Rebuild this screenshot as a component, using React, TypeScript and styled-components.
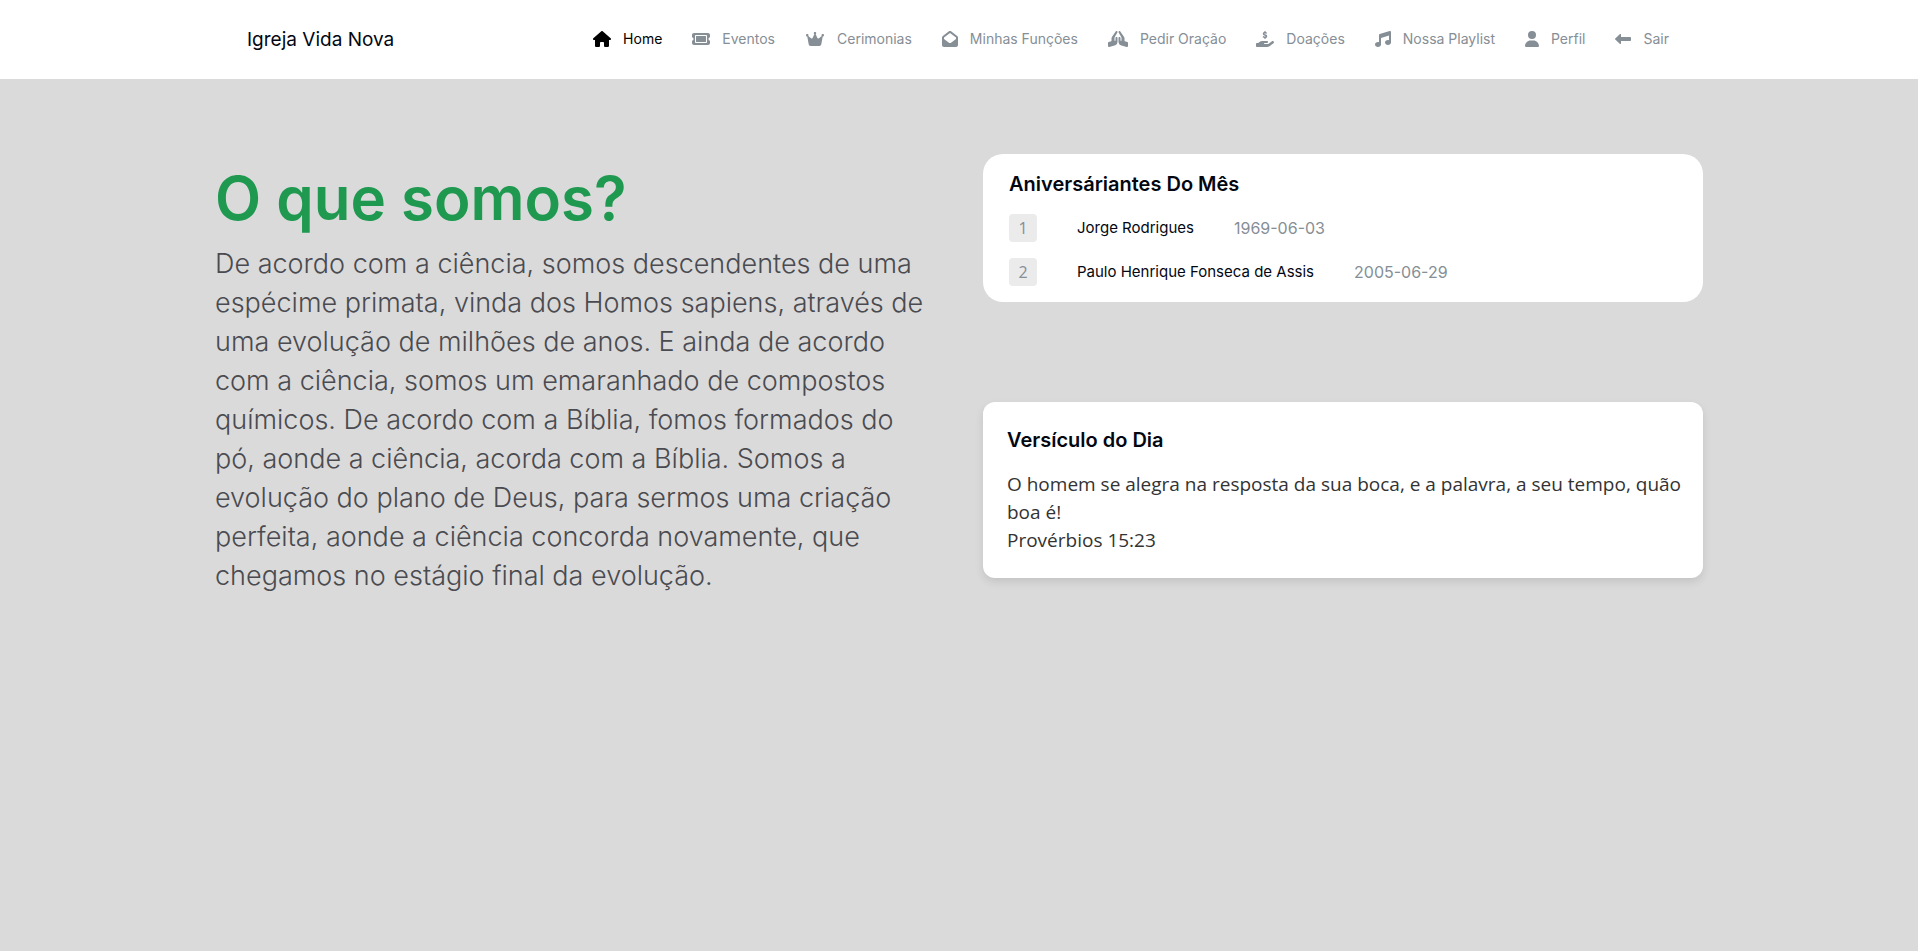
import React from "react";
import styled, { createGlobalStyle } from "styled-components";
import {
  FaHouse,
  FaTicket,
  FaCrown,
  FaEnvelopeOpen,
  FaHandsPraying,
  FaHandHoldingDollar,
  FaMusic,
  FaUser,
  FaLeftLong,
} from "react-icons/fa6";
import type { IconType } from "react-icons";

const GlobalStyle = createGlobalStyle`
  *, *::before, *::after { box-sizing: border-box; }
  body {
    margin: 0;
    background: #dadada;
    color: #030712;
    font-family: Inter, "Liberation Sans", sans-serif;
  }
  h1, h2, p, ul, ol { margin: 0; padding: 0; }
  ul, ol { list-style: none; }
`;

const Header = styled.header`
  background: #ffffff;
`;

const HeaderInner = styled.div`
  display: flex;
  align-items: center;
  justify-content: space-between;
  max-width: 1488px;
  min-height: 79px;
  margin: 0 auto;
  padding: 0 34px 0 32px;
`;

const Brand = styled.a`
  color: #030712;
  font-size: 19px;
  line-height: 28px;
  text-decoration: none;
  white-space: nowrap;
`;

const NavList = styled.ul`
  display: flex;
  gap: 30px;
  padding-bottom: 2px;
`;

const NavLink = styled.a<{ $active?: boolean; $iconWidth: number }>`
  display: flex;
  align-items: center;
  gap: 12px;
  color: ${({ $active }) => ($active ? "#000000" : "#868e96")};
  font-size: 14px;
  line-height: 20px;
  text-decoration: none;
  white-space: nowrap;

  svg {
    flex: none;
    height: 16px;
    width: ${({ $iconWidth }) => $iconWidth}px;
  }
`;

const Main = styled.main`
  display: grid;
  grid-template-columns: repeat(2, minmax(0, 1fr));
  align-items: start;
  gap: 48px;
  max-width: 1488px;
  margin: 0 auto;
  padding: 75px 0 48px;
`;

const About = styled.section`
  display: flex;
  flex-direction: column;
  gap: 14px;
  padding-top: 12px;
`;

const AboutTitle = styled.h1`
  color: #1f9950;
  font-size: 60px;
  font-weight: 600;
  line-height: 64px;
`;

const AboutText = styled.p`
  color: #4a4b50;
  font-size: 27px;
  font-weight: 300;
  line-height: 39px;
  white-space: pre-line;
`;

const Side = styled.div`
  display: flex;
  flex-direction: column;
  gap: 100px;
`;

const Card = styled.section`
  display: flex;
  flex-direction: column;
  gap: 16px;
  background: #ffffff;
`;

const BirthdayCard = styled(Card)`
  padding: 16px 26px;
  border-radius: 20px;
`;

const VerseCard = styled(Card)`
  padding: 24px 16px 24px 24px;
  border-radius: 12px;
  box-shadow: 0 4px 8px rgba(0, 0, 0, 0.1);
`;

const CardTitle = styled.h2`
  font-size: 20px;
  font-weight: 600;
  line-height: 28px;
`;

const BirthdayList = styled.ol`
  display: flex;
  flex-direction: column;
  gap: 16px;
`;

const BirthdayItem = styled.li`
  display: flex;
  align-items: center;
  gap: 40px;
  font-size: 15px;
  line-height: 28px;
`;

const Rank = styled.span`
  width: 28px;
  height: 28px;
  border-radius: 4px;
  background: #ebebeb;
  color: #868e96;
  font-family: "Open Sans", sans-serif;
  font-size: 16px;
  text-align: center;
`;

const BirthDate = styled.time`
  color: #868e96;
  font-size: 16px;
`;

const Verse = styled.p`
  color: #333333;
  font-family: "Open Sans", sans-serif;
  font-size: 19px;
  line-height: 28px;
`;

const navItems: { label: string; icon: IconType; iconWidth: number }[] = [
  { label: "Home", icon: FaHouse, iconWidth: 18 },
  { label: "Eventos", icon: FaTicket, iconWidth: 18 },
  { label: "Cerimonias", icon: FaCrown, iconWidth: 20 },
  { label: "Minhas Funções", icon: FaEnvelopeOpen, iconWidth: 16 },
  { label: "Pedir Oração", icon: FaHandsPraying, iconWidth: 20 },
  { label: "Doações", icon: FaHandHoldingDollar, iconWidth: 18 },
  { label: "Nossa Playlist", icon: FaMusic, iconWidth: 16 },
  { label: "Perfil", icon: FaUser, iconWidth: 14 },
  { label: "Sair", icon: FaLeftLong, iconWidth: 16 },
];

const birthdays = [
  { name: "Jorge Rodrigues", date: "1969-06-03" },
  { name: "Paulo Henrique Fonseca de Assis", date: "2005-06-29" },
];

const aboutText = `De acordo com a ciência, somos descendentes de uma
espécime primata, vinda dos Homos sapiens, através de
uma evolução de milhões de anos. E ainda de acordo
com a ciência, somos um emaranhado de compostos
químicos. De acordo com a Bíblia, fomos formados do
pó, aonde a ciência, acorda com a Bíblia. Somos a
evolução do plano de Deus, para sermos uma criação
perfeita, aonde a ciência concorda novamente, que
chegamos no estágio final da evolução.`;

export default function App() {
  return (
    <>
      <GlobalStyle />
      <Header>
        <HeaderInner>
          <Brand href="#">Igreja Vida Nova</Brand>
          <nav>
            <NavList>
              {navItems.map(({ label, icon: Icon, iconWidth }, index) => (
                <li key={label}>
                  <NavLink href="#" $active={index === 0} $iconWidth={iconWidth}>
                    <Icon aria-hidden="true" />
                    {label}
                  </NavLink>
                </li>
              ))}
            </NavList>
          </nav>
        </HeaderInner>
      </Header>
      <Main>
        <About>
          <AboutTitle>O que somos?</AboutTitle>
          <AboutText>{aboutText}</AboutText>
        </About>
        <Side>
          <BirthdayCard>
            <CardTitle>Aniversáriantes Do Mês</CardTitle>
            <BirthdayList>
              {birthdays.map(({ name, date }, index) => (
                <BirthdayItem key={name}>
                  <Rank>{index + 1}</Rank>
                  <span>{name}</span>
                  <BirthDate dateTime={date}>{date}</BirthDate>
                </BirthdayItem>
              ))}
            </BirthdayList>
          </BirthdayCard>
          <VerseCard>
            <CardTitle>Versículo do Dia</CardTitle>
            <Verse>
              O homem se alegra na resposta da sua boca, e a palavra, a seu tempo, quão boa é!
              <br />
              Provérbios 15:23
            </Verse>
          </VerseCard>
        </Side>
      </Main>
    </>
  );
}
